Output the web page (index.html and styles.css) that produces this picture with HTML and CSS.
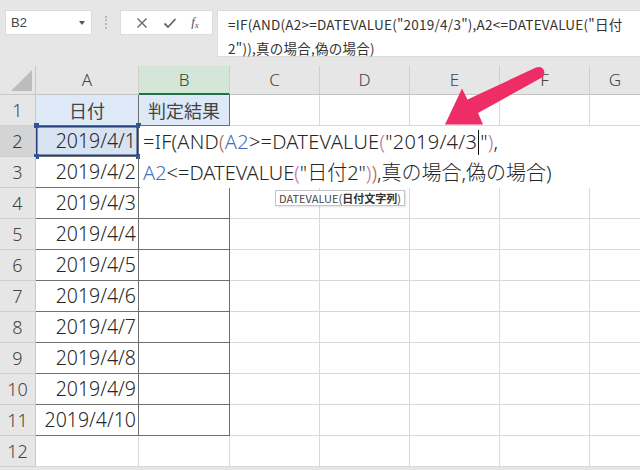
FILE: index.html
```html
<!DOCTYPE html>
<html lang="ja">
<head>
<meta charset="utf-8">
<link rel="stylesheet" href="styles.css">
</head>
<body>
<div class="page">
  <div class="toolbar">
    <div class="namebox"><span>B2</span><span class="dd"></span></div>
    <div class="sep"><span></span></div>
    <div class="btns">
      <svg class="ico" viewBox="0 0 12 12" width="12" height="12"><path d="M1.5 1.5 L10.5 10.5 M10.5 1.5 L1.5 10.5" stroke="#666" stroke-width="1.4" fill="none"/></svg>
      <svg class="ico" viewBox="0 0 14 12" width="14" height="12"><path d="M1.5 6.5 L5 10 L12.5 2" stroke="#666" stroke-width="1.8" fill="none"/></svg>
      <span class="fx">f<sub>x</sub></span>
    </div>
    <div class="formula">=IF(AND(A2&gt;=DATEVALUE("2019/4/3"),A2&lt;=DATEVALUE("日付<br>2")),真の場合,偽の場合)</div>
  </div>
  <div class="sheet">
    <div class="c corner"><span class="tri"></span></div>
    <div class="c ch">A</div>
    <div class="c ch sel">B</div>
    <div class="c ch">C</div>
    <div class="c ch">D</div>
    <div class="c ch">E</div>
    <div class="c ch">F</div>
    <div class="c ch last">G</div>

    <div class="c rh">1</div>
    <div class="c t th">日付</div>
    <div class="c t th">判定結果</div>
    <div class="c"></div><div class="c"></div><div class="c"></div><div class="c"></div><div class="c last"></div>

    <div class="c rh rsel">2</div>
    <div class="c t num active">2019/4/1<i class="k k1"></i><i class="k k2"></i><i class="k k3"></i><i class="k k4"></i></div>
    <div class="c t"></div>
    <div class="c"></div><div class="c"></div><div class="c"></div><div class="c"></div><div class="c last"></div>

    <div class="c rh">3</div>
    <div class="c t num">2019/4/2</div>
    <div class="c t"></div>
    <div class="c"></div><div class="c"></div><div class="c"></div><div class="c"></div><div class="c last"></div>

    <div class="c rh">4</div>
    <div class="c t num">2019/4/3</div>
    <div class="c t"></div>
    <div class="c"></div><div class="c"></div><div class="c"></div><div class="c"></div><div class="c last"></div>

    <div class="c rh">5</div>
    <div class="c t num">2019/4/4</div>
    <div class="c t"></div>
    <div class="c"></div><div class="c"></div><div class="c"></div><div class="c"></div><div class="c last"></div>

    <div class="c rh">6</div>
    <div class="c t num">2019/4/5</div>
    <div class="c t"></div>
    <div class="c"></div><div class="c"></div><div class="c"></div><div class="c"></div><div class="c last"></div>

    <div class="c rh">7</div>
    <div class="c t num">2019/4/6</div>
    <div class="c t"></div>
    <div class="c"></div><div class="c"></div><div class="c"></div><div class="c"></div><div class="c last"></div>

    <div class="c rh">8</div>
    <div class="c t num">2019/4/7</div>
    <div class="c t"></div>
    <div class="c"></div><div class="c"></div><div class="c"></div><div class="c"></div><div class="c last"></div>

    <div class="c rh">9</div>
    <div class="c t num">2019/4/8</div>
    <div class="c t"></div>
    <div class="c"></div><div class="c"></div><div class="c"></div><div class="c"></div><div class="c last"></div>

    <div class="c rh">10</div>
    <div class="c t num">2019/4/9</div>
    <div class="c t"></div>
    <div class="c"></div><div class="c"></div><div class="c"></div><div class="c"></div><div class="c last"></div>

    <div class="c rh">11</div>
    <div class="c t num">2019/4/10</div>
    <div class="c t"></div>
    <div class="c"></div><div class="c"></div><div class="c"></div><div class="c"></div><div class="c last"></div>

    <div class="c rh">12</div>
    <div class="c"></div>
    <div class="c"></div>
    <div class="c"></div><div class="c"></div><div class="c"></div><div class="c"></div><div class="c last"></div>

    <div class="editor">
      <div class="eline first">=IF(AND<span class="p2">(</span><span class="ref">A2</span>&gt;=DATEVALUE<span class="p3">(</span>"2019/4/3<span class="caret"></span>"<span class="p3">)</span>,</div>
      <div class="eline"><span class="ref">A2</span>&lt;=DATEVALUE<span class="p3">(</span>"日付2"<span class="p3">)</span><span class="p2">)</span>,真の場合,偽の場合)</div>
    </div>
    <div class="tip">DATEVALUE(<b>日付文字列</b>)</div>
  </div>
  <svg class="arrow" viewBox="0 0 640 470" width="640" height="470">
    <path d="M536 67.5 Q542 65.5 544 70.5 Q545.5 75.5 541 78 L478 113 L483 124.5 L445 124.5 L462 88.5 L467.5 99.5 Z" fill="#ee2d66"/>
  </svg>
</div>
</body>
</html>
```

FILE: styles.css
```css
* { box-sizing: border-box; }
html, body { margin: 0; padding: 0; }
body {
  width: 640px;
  height: 470px;
  overflow: hidden;
  background: #e6e6e6;
  font-family: "Noto Sans", "Noto Sans CJK JP", sans-serif;
  color: #222;
}
.page { position: relative; width: 640px; height: 470px; }

.toolbar {
  height: 66px;
  display: flex;
  align-items: flex-start;
  padding: 10px 0 0 5px;
  background: #e6e6e6;
}
.namebox {
  width: 87px;
  height: 25px;
  background: #fff;
  border: 1px solid #dcdcdc;
  display: flex;
  align-items: center;
  justify-content: space-between;
  padding: 0 6px 0 5px;
  font-size: 13px;
  color: #444;
  font-family: "Liberation Sans", sans-serif;
}
.dd {
  width: 0; height: 0;
  border-left: 3.5px solid transparent;
  border-right: 3.5px solid transparent;
  border-top: 4px solid #555;
}
.sep {
  width: 28px;
  height: 25px;
  display: flex;
  justify-content: center;
  align-items: center;
}
.sep span {
  width: 2px;
  height: 13px;
  border-left: 2px dotted #b8b8b8;
}
.btns {
  width: 93px;
  height: 25px;
  background: #fff;
  border: 1px solid #dcdcdc;
  display: flex;
  align-items: center;
  justify-content: space-around;
  padding: 0 6px 0 8px;
}
.fx {
  font-family: "Liberation Serif", serif;
  font-style: italic;
  font-size: 13px;
  color: #555;
  line-height: 1;
}
.fx sub { font-size: 9px; vertical-align: -2px; }
.formula {
  margin-left: 4px;
  flex: 1;
  height: 47px;
  background: #fff;
  border: 1px solid #dcdcdc;
  border-right: none;
  padding: 1px 0 0 10px;
  font-family: "Noto Sans CJK JP", sans-serif;
  font-size: 13.5px;
  letter-spacing: 0.25px;
  line-height: 24px;
  color: #333;
  white-space: nowrap;
}

.sheet {
  position: relative;
  display: grid;
  grid-template-columns: 36px 103px 91px 90px 90px 90px 90px 50px;
  grid-template-rows: 29px repeat(12, 31px);
  background: #fff;
}
.c {
  border-right: 1px solid #d9d9d9;
  border-bottom: 1px solid #d9d9d9;
  font-size: 19.5px;
  line-height: 30px;
  white-space: nowrap;
  overflow: visible;
  position: relative;
}
.c.last { border-right: none; }
.corner {
  background: #e6e6e6;
  border-right: 1px solid #c8c8c8;
  border-bottom: 1px solid #c8c8c8;
}
.tri {
  position: absolute;
  right: 3px;
  bottom: 3px;
  width: 0; height: 0;
  border-left: 21px solid transparent;
  border-bottom: 21px solid #bcbcbc;
}
.ch {
  background: #e6e6e6;
  border-right: 1px solid #cfcfcf;
  border-bottom: 1px solid #c4c4c4;
  text-align: center;
  font-size: 17px;
  line-height: 28px;
  color: #444;
  font-weight: 300;
}
.ch.sel {
  background: #d3e6d7;
  border-bottom: 2px solid #217346;
  color: #1f4d33;
}
.rh {
  background: #e6e6e6;
  border-right: 1px solid #c8c8c8;
  border-bottom: 1px solid #cfcfcf;
  text-align: center;
  font-size: 18px;
  color: #444;
  font-weight: 300;
}
.rh.rsel { background: #d4d4d4; color: #3a3a3a; }
.t {
  border-right: 1px solid #6e6e6e;
  border-bottom: 1px solid #6e6e6e;
}
.th {
  background: #dde9f6;
  text-align: center;
  color: #444;
  font-family: "Noto Sans CJK JP", sans-serif;
  font-size: 18px;
}
.num {
  text-align: right;
  padding-right: 2px;
  color: #262626;
  font-weight: 300;
}
.active {
  background: #d8e3f2;
  box-shadow: inset 0 0 0 1.5px #1f3f7a;
}
.k {
  position: absolute;
  width: 5px;
  height: 5px;
  background: #2f5597;
}
.k1 { left: -2px; top: -3px; }
.k2 { right: -3px; top: -3px; }
.k3 { left: -2px; bottom: -3px; }
.k4 { right: -3px; bottom: -3px; }

.editor {
  position: absolute;
  left: 140px;
  top: 60px;
  width: 500px;
  height: 62px;
  background: #fff;
  padding: 0 0 0 3px;
  font-size: 20px;
  line-height: 31px;
  color: #262626;
  font-weight: 300;
  white-space: nowrap;
}
.eline { height: 31px; }
.eline.first { letter-spacing: 0.25px; }
.p2 { color: #b0643a; }
.p3 { color: #c071a8; }
.ref { color: #3f6fbf; }
.caret {
  display: inline-block;
  width: 0;
  height: 25px;
  border-left: 1px solid #111;
  vertical-align: -6px;
  margin: 0 1px 0 1px;
}
.tip {
  position: absolute;
  left: 275px;
  top: 124px;
  height: 16px;
  padding: 0 3px;
  background: #fff;
  border: 1px solid #c4c4c4;
  box-shadow: 1px 1px 2px rgba(0,0,0,0.12);
  font-family: "Noto Sans CJK JP", sans-serif;
  font-size: 11px;
  line-height: 14px;
  color: #444;
  white-space: nowrap;
}
.tip b { font-weight: bold; color: #333; }

.arrow {
  position: absolute;
  left: 0;
  top: 0;
  pointer-events: none;
}
```
